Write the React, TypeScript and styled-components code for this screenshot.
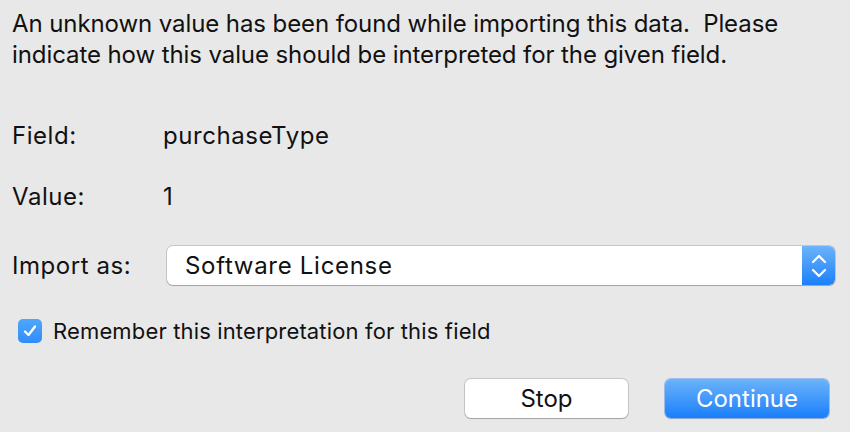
import React from "react";
import styled, { createGlobalStyle } from "styled-components";

const Global = createGlobalStyle`
  html, body { margin: 0; padding: 0; background: #e8e8e8; }
  body { font-family: Inter, "Liberation Sans", Arial, sans-serif; -webkit-font-smoothing: antialiased; }
`;

const Dialog = styled.div`
  width: 850px;
  height: 432px;
  box-sizing: border-box;
  padding: 8px 15px 0 12px;
  background: #e8e8e8;
  color: #111;
  font-size: 24px;
  display: flex;
  flex-direction: column;
`;

const Message = styled.p`
  margin: 0;
  line-height: 31px;
  letter-spacing: -0.09px;
`;

const InfoRow = styled.div<{ $top: number }>`
  display: flex;
  align-items: center;
  margin-top: ${(p) => p.$top}px;
  line-height: 31px;
  min-height: 31px;
  letter-spacing: 0.55px;
`;

const Label = styled.span<{ $w?: number }>`
  width: ${(p) => p.$w ?? 151}px;
  flex: none;
`;

const Popup = styled.div`
  flex: 1;
  height: 39px;
  box-sizing: border-box;
  display: flex;
  align-items: stretch;
  background: #fff;
  border-radius: 6px;
  box-shadow: 0 0 0 1px rgba(0, 0, 0, 0.14), 0 1px 1px rgba(0, 0, 0, 0.18);
  overflow: hidden;
`;

const PopupText = styled.span`
  flex: 1;
  padding-left: 18px;
  display: flex;
  align-items: center;
  letter-spacing: 0.7px;
`;

const Stepper = styled.span`
  width: 33px;
  flex: none;
  display: flex;
  align-items: center;
  justify-content: center;
  background: linear-gradient(#6cb3fa, #1b80fb);
`;

const CheckRow = styled.label`
  display: flex;
  align-items: center;
  gap: 11px;
  margin-top: 34px;
  padding-left: 6px;
  height: 24px;
  font-size: 22px;
  letter-spacing: 0.15px;
`;

const CheckBox = styled.span`
  width: 24px;
  height: 24px;
  flex: none;
  border-radius: 5px;
  background: linear-gradient(#4fa6fb, #2f8dfb);
  display: flex;
  align-items: center;
  justify-content: center;
`;

const Buttons = styled.div`
  display: flex;
  justify-content: flex-end;
  gap: 37px;
  margin-top: 36px;
  padding-right: 6px;
`;

const Button = styled.button<{ $primary?: boolean }>`
  width: ${(p) => (p.$primary ? 164 : 163)}px;
  height: 39px;
  border: none;
  border-radius: 6px;
  font: inherit;
  font-size: 24px;
  padding: 0;
  color: ${(p) => (p.$primary ? "#fff" : "#111")};
  background: ${(p) => (p.$primary ? "linear-gradient(#6cb3fa, #1a7ffb)" : "#fff")};
  box-shadow: ${(p) =>
    p.$primary
      ? "0 0 0 1px rgba(30, 110, 230, 0.35), 0 1px 1px rgba(0,0,0,0.15)"
      : "0 0 0 1px rgba(0, 0, 0, 0.14), 0 1px 1px rgba(0, 0, 0, 0.18)"};
`;

export default function App() {
  return (
    <>
      <Global />
      <Dialog>
        <Message>
          An unknown value has been found while importing this data.&nbsp; Please
          <br />
          indicate how this value should be interpreted for the given field.
        </Message>
        <InfoRow $top={50}>
          <Label>Field:</Label>
          <span>purchaseType</span>
        </InfoRow>
        <InfoRow $top={30}>
          <Label>Value:</Label>
          <span>1</span>
        </InfoRow>
        <InfoRow $top={34}>
          <Label $w={155}>Import as:</Label>
          <Popup>
            <PopupText>Software License</PopupText>
            <Stepper>
              <svg width="16" height="26" viewBox="0 0 16 26" fill="none" stroke="#fff" strokeWidth="2.2" strokeLinecap="round" strokeLinejoin="round">
                <path d="M2 9 L8 3 L14 9" />
                <path d="M2 17 L8 23 L14 17" />
              </svg>
            </Stepper>
          </Popup>
        </InfoRow>
        <CheckRow>
          <CheckBox>
            <svg width="16" height="16" viewBox="0 0 16 16" fill="none" stroke="#fff" strokeWidth="2.4" strokeLinecap="round" strokeLinejoin="round">
              <path d="M3 8.5 L6.5 12 L13 3.5" />
            </svg>
          </CheckBox>
          <span>Remember this interpretation for this field</span>
        </CheckRow>
        <Buttons>
          <Button>Stop</Button>
          <Button $primary>Continue</Button>
        </Buttons>
      </Dialog>
    </>
  );
}
